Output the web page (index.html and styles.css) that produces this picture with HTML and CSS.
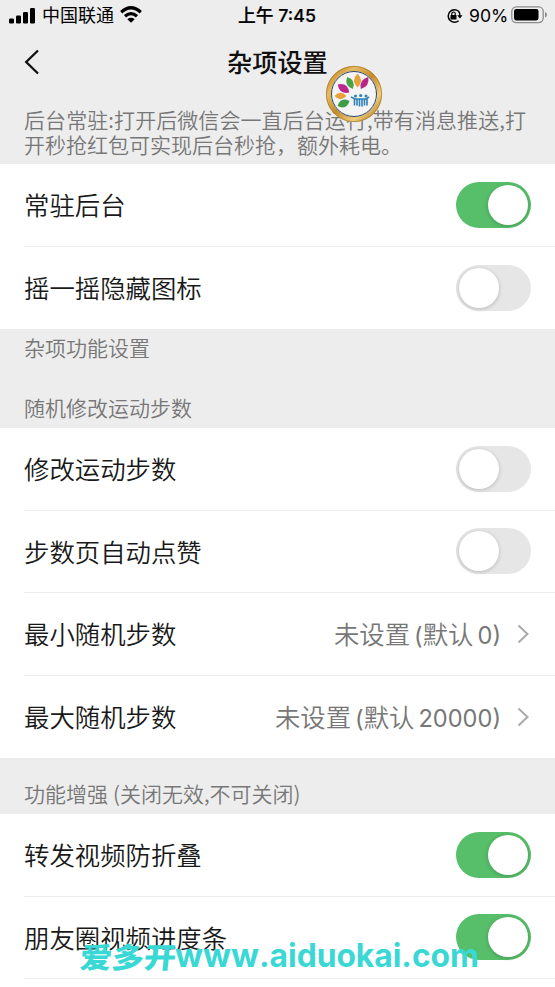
FILE: index.html
```html
<!DOCTYPE html>
<html lang="zh-CN">
<head>
<meta charset="utf-8">
<title>杂项设置</title>
<link rel="stylesheet" href="styles.css">
</head>
<body>
<main class="screen">
  <header class="status">
    <svg class="signal" width="26" height="16" viewBox="0 0 26 16"><rect x="0" y="10.500" width="5" height="5" rx="1.300"/><rect x="7" y="7.500" width="5" height="8" rx="1.300"/><rect x="14" y="4" width="5" height="11.500" rx="1.300"/><rect x="21" y="0" width="5" height="15.500" rx="1.300"/></svg>
    <span class="carrier">中国联通</span>
    <svg class="wifi" width="24" height="17" viewBox="0 0 24 17"><path d="M2.200 6.200Q12-2.800 21.800 6.200M6 10.200Q12 5 18 10.200" fill="none" stroke="#000" stroke-width="3.200"/><path d="M8.300 13.200Q12 10.400 15.700 13.200L12 16.800Z"/></svg>
    <span class="clock">上午 7:45</span>
    <svg class="lock" width="17" height="16" viewBox="0 0 17 16"><path d="M12.600 3.200A6.300 6.300 0 1 0 12.600 12.800M12.600 3.200A6.300 6.300 0 0 1 13.800 8" fill="none" stroke="#000" stroke-width="1.500"/><path d="M11.200 7.200h5.300l-2.600 3.400z"/><rect x="4.500" y="7" width="6" height="4.600" rx=".6"/><path d="M5.800 7V5.700a1.700 1.700 0 0 1 3.400 0V7" fill="none" stroke="#000" stroke-width="1.200"/></svg>
    <span class="percent">90%</span>
    <svg class="battery" width="37" height="18" viewBox="0 0 37 18"><rect x=".8" y=".8" width="31.400" height="15.800" rx="4.500" fill="none" stroke="#8c8c8c" stroke-width="1.300"/><rect x="3" y="3" width="24.500" height="11.400" rx="2.300"/><path d="M34 6q2 .6 2 2.700T34 11.400z" fill="#8c8c8c"/></svg>
  </header>
  <nav class="navbar">
    <svg class="back" width="16" height="26" viewBox="0 0 16 26"><path d="M14 1.500 2.200 13 14 24.500" fill="none" stroke="#111" stroke-width="2.300"/></svg>
    <h1>杂项设置</h1>
  </nav>
  <p class="note intro"><span class="line1">后台常驻:打开后微信会一直后台运行,带有消息推送,打</span><br>开秒抢红包可实现后台秒抢，额外耗电。</p>

  <section class="group">
    <div class="row"><span>常驻后台</span><i class="switch on"></i></div>
    <div class="row"><span>摇一摇隐藏图标</span><i class="switch"></i></div>
  </section>
  <div class="note double"><p>杂项功能设置</p><p>随机修改运动步数</p></div>
  <section class="group">
    <div class="row"><span>修改运动步数</span><i class="switch"></i></div>
    <div class="row"><span>步数页自动点赞</span><i class="switch"></i></div>
    <div class="row"><span>最小随机步数</span><span class="value">未设置<b>(</b>默认<b>0)</b></span><svg class="chevron" width="12" height="20" viewBox="0 0 12 20"><path d="m1.500 1.500 9 8.500-9 8.500"/></svg></div>
    <div class="row"><span>最大随机步数</span><span class="value">未设置<b>(</b>默认<b>20000)</b></span><svg class="chevron" width="12" height="20" viewBox="0 0 12 20"><path d="m1.500 1.500 9 8.500-9 8.500"/></svg></div>
  </section>
  <p class="note single">功能增强<b>(</b>关闭无效,不可关闭)</p>
  <section class="group">
    <div class="row"><span>转发视频防折叠</span><i class="switch on"></i></div>
    <div class="row"><span>朋友圈视频进度条</span><i class="switch on"></i></div>
    <div class="row"></div>
  </section>

  <svg class="badge" width="58" height="58" viewBox="0 0 58 58">
    <defs><linearGradient id="gold" x1="0" y1="0" x2="1" y2="1"><stop offset="0" stop-color="#b97d1e"/><stop offset=".25" stop-color="#e6bd62"/><stop offset=".5" stop-color="#c58a2a"/><stop offset=".75" stop-color="#f0cf7d"/><stop offset="1" stop-color="#a8701c"/></linearGradient></defs>
    <circle cx="29" cy="29" r="25.500" fill="#f4f4f5" stroke="url(#gold)" stroke-width="5"/>
    <circle cx="29" cy="29" r="27.600" fill="none" stroke="#a47524" stroke-width=".7"/>
    <circle cx="29" cy="29" r="22.500" fill="none" stroke="#29456b" stroke-width="1"/>
    <g>
      <path fill="#3e9e45" transform="translate(18.500 38.500) rotate(-23)" d="M-6.500 0Q0-7.500 6.500 0Q0 7.500-6.500 0"/>
      <path fill="#e6a137" transform="translate(15.500 31)" d="M-6 0Q0-6.500 6 0Q0 6.500-6 0"/>
      <path fill="#bd268b" transform="translate(18.500 23.500) rotate(35)" d="M-7 0Q0-7.500 7 0Q0 7.500-7 0"/>
      <path fill="#4ca344" transform="translate(25 18) rotate(65)" d="M-6.500 0Q0-7 6.500 0Q0 7-6.500 0"/>
      <path fill="#e9a13a" transform="translate(32.500 15.500) rotate(90)" d="M-7 0Q0-7 7 0Q0 7-7 0"/>
      <path fill="#b92587" transform="translate(39.500 18) rotate(-58)" d="M-7 0Q0-6.500 7 0Q0 6.500-7 0"/>
    </g>
    <g fill="none" stroke="#2f82b8" stroke-width="1.600"><path d="M26 32l4 2h11l3-2M29.500 34v6.500M32 34v6.500M34.500 34v7.500M37 34v7.500M39.500 34v6.500M42 34v6.500"/></g>
    <g fill="#2f82b8"><circle cx="30.500" cy="31" r="1.500"/><circle cx="35.700" cy="30.500" r="1.600"/><circle cx="41" cy="31" r="1.500"/></g>
  </svg>
  <svg class="watermark" width="405" height="48" viewBox="0 0 405 48">
    <text class="wm-cjk" transform="translate(0 30) skewX(-6)" x="0" y="0" textLength="96" lengthAdjust="spacingAndGlyphs">爱多开</text>
    <text class="wm-latin" x="96" y="29" textLength="84" lengthAdjust="spacingAndGlyphs">www</text>
    <text class="wm-latin" x="180" y="29" textLength="220" lengthAdjust="spacingAndGlyphs">.aiduokai.com</text>
  </svg>
</main>
</body>
</html>
```
FILE: styles.css
```css
* { box-sizing: border-box; }
body { margin: 0; background: #ededed; font-family: Inter, "Noto Sans CJK SC", sans-serif; color: #191919; }
h1, p { margin: 0; }
b { font-weight: inherit; }
.screen { position: relative; width: 555px; height: 987px; overflow: hidden; background: #ededed; }
.status { display: flex; align-items: center; height: 31px; padding-left: 9px; color: #000; white-space: nowrap; font-size: 18px; }
.carrier { margin-left: 7px; width: 72px; }
.wifi { margin-left: 5px; margin-top: -3px; }
.clock { margin-left: 95px; width: 78px; font-weight: 500; font-size: 17.8px; -webkit-text-stroke: .2px #000; }
.clock, .carrier, .percent { line-height: 24px; }
.lock { margin-left: 130px; }
.percent { margin-left: 6px; width: 38px; font-size: 17.6px; }
.battery { margin-left: 4px; margin-top: -2px; }
.navbar { display: flex; align-items: center; height: 63px; padding-left: 24px; }
.back { margin-top: -1px; }
.navbar h1 { margin-left: 187px; font-size: 25.2px; font-weight: 500; line-height: 36px; color: #111; }
.note { font-family: "Noto Sans CJK SC DemiLight", "Noto Sans CJK SC", sans-serif; font-weight: 350; font-size: 21px; line-height: 25px; color: #777; padding-left: 24px; white-space: nowrap; }
.intro { height: 70px; padding-top: 13px; }
.line1 { letter-spacing: .08px; }
.double { height: 99px; padding-top: 6px; display: flex; flex-direction: column; gap: 35px; }
.single { height: 56px; padding-top: 23px; }
.single b { margin-left: 5px; }
.group { background: #fff; padding-left: 24px; font-family: "Noto Sans CJK SC DemiLight", "Noto Sans CJK SC", sans-serif; font-weight: 350; font-size: 25.4px; }
.row { display: flex; align-items: center; height: 82.5px; padding-right: 24px; border-bottom: 1px solid #ededed; line-height: 36px; white-space: nowrap; }
.row:last-child { border-bottom: 0; }
.row > span:first-child { flex: 1; margin-top: -1px; }
.value { color: #777; margin-top: 2px; }
.value b { font-family: Inter, sans-serif; font-size: 23.6px; font-weight: 400; margin-left: 4px; }
.chevron { margin-left: 16px; margin-right: 2px; fill: none; stroke: #aaa; stroke-width: 2; }
.switch { width: 75px; height: 46px; border-radius: 23px; background: #e6e6e6; padding: 3px; display: flex; }
.switch::after { content: ""; width: 40px; height: 40px; border-radius: 50%; background: #fff; box-shadow: 0 1px 4px #0003; }
.switch.on { background: #57be6a; justify-content: flex-end; }
.badge { position: absolute; left: 325px; top: 65px; }
.watermark { position: absolute; left: 79px; top: 938px; fill: #39d8d5; overflow: visible; }
.wm-cjk { font: 900 28.5px "Noto Sans CJK SC", sans-serif; }
.wm-latin { font: 700 32px Inter, sans-serif; }
```
